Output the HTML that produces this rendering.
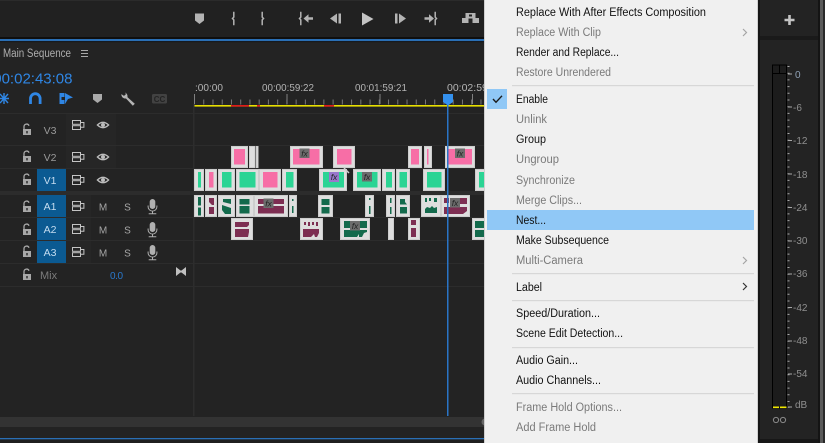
<!DOCTYPE html>
<html><head><meta charset="utf-8">
<style>
html,body{margin:0;padding:0;background:#232323;width:825px;height:443px;overflow:hidden}
svg{display:block}
text{font-family:"Liberation Sans",sans-serif}
.m{font-size:11.5px;fill:#111}
.d{font-size:11.5px;fill:#7a7a7a}
.l{font-size:10.5px;fill:#9a9a9a}
.r{font-size:10.5px;fill:#b4b4b4}
.a{fill:#c4dcf0;font-size:10.5px}
.s{font-size:10px;fill:#8f8f8f}
.t{font-size:10px;fill:#a6a6a6}
</style></head><body>
<svg width="825" height="443" viewBox="0 0 825 443" xmlns="http://www.w3.org/2000/svg">
<defs>
<g id="lock"><path d="M-4 -1h8v6h-8z" fill="#a8a8a8"/><path d="M-3 -1v-2.500a2.600 2.600 0 0 1 5-.8" fill="none" stroke="#a8a8a8" stroke-width="1.300"/><rect x="-.7" y="1" width="1.400" height="2.400" fill="#232323"/></g>
<g id="tout" fill="none" stroke="#c4c4c4" stroke-width="1"><rect x="-5.500" y="-4.500" width="8" height="3.800"/><rect x="-5.500" y=".7" width="8" height="3.800"/><path d="M2.500 -2.500h3.400v4.800h-3.400"/></g>
<g id="eye"><path d="M-5.600 0q5.600 -5.400 11.200 0q-5.600 5.400 -11.200 0z" fill="#2a2a2a" stroke="#bdbdbd" stroke-width="1.300"/><circle r="2" fill="#bdbdbd"/></g>
<g id="mic"><rect x="-2.800" y="-7" width="5.600" height="10" rx="2.800" fill="#b0b0b0"/><path d="M-4.400 -.5v1.200a4.400 4.400 0 0 0 8.800 0v-1.200M0 5.200v2.400M-3.800 7.800h7.600" fill="none" stroke="#b0b0b0" stroke-width="1"/></g>
<g id="fx"><rect x="-5" y="-5" width="10" height="9.500" fill="#6c6c6c"/><text x="0" y="3" text-anchor="middle" font-size="8.500" font-style="italic" font-family="Liberation Serif,serif" fill="#222">fx</text></g>
</defs>

<!-- base -->
<rect width="825" height="443" fill="#232323"/>
<rect width="485" height="37" fill="#212121"/>
<rect y="0" width="485" height="1" fill="#2b2b2b"/>
<rect y="37" width="485" height="2" fill="#0f0f0f"/>
<rect y="39" width="485" height="2.200" fill="#2a6fb5"/>
<rect y="41.200" width="485" height="1" fill="#121212"/>

<!-- transport -->
<g fill="#b3b3b3">
<path d="M195 13.500h9v7l-4.500 3.500-4.500-3.500z"/>
<path d="M362 12.500l11.500 6.500-11.500 6.500z" fill="#c4c4c4"/>
<path d="M330 18.500l7-5v10zM338.500 13.500h2.500v10h-2.500z"/>
<path d="M395 13.500h2.500v10h-2.500zM399 13.500l7 5-7 5z"/>
<path d="M303.500 18.500l5-4.200v2.900h4.500v2.600h-4.500v2.900z"/>
<path d="M424.500 17.200h4.500v-2.900l5 4.200-5 4.200v-2.900h-4.500z"/>
<path d="M462 18h6.500v5h-6.500zM472.500 18h6.500v5h-6.500zM465.500 13h10v5.500h-10z"/><rect x="469" y="14.500" width="3" height="2" fill="#212121"/>
</g>
<g fill="none" stroke="#b3b3b3" stroke-width="1.500">
<path d="M234.500 12.500h-.7v4.600l-1.300 1.400 1.300 1.400v4.600h.7"/>
<path d="M261.500 12.500h.7v4.600l1.300 1.400-1.300 1.400v4.600h-.7"/>
<path d="M301.500 12.500h-.7v4.600l-1.300 1.400 1.300 1.400v4.600h.7"/>
<path d="M434.500 12.500h.7v4.600l1.300 1.400-1.300 1.400v4.600h-.7"/>
</g>

<!-- sequence header -->
<text x="3" y="57" font-size="11.500px" fill="#aeaeae" textLength="68" lengthAdjust="spacingAndGlyphs">Main Sequence</text>
<path d="M81 50.500h7M81 53.500h7M81 56.500h7" stroke="#a8a8a8" stroke-width="1"/>
<text x="72.500" y="83.500" text-anchor="end" font-size="15px" fill="#2f86e4">00:02:43:08</text>

<!-- toolbar -->
<g stroke="#2f86e4" fill="none" stroke-width="1.400">
<path d="M0 94l8 9M8 94l-8 9M-1 98.500h10M4 93v11"/>
</g>
<path d="M30.500 104v-5.500a4.800 4.800 0 0 1 9.600 0v5.500" fill="none" stroke="#2f86e4" stroke-width="2.800"/>
<path d="M59.500 93h5v4h-3v3h3v4h-5z" fill="#2f86e4"/><path d="M65 93l8 4.500-5 1.500-3 5z" fill="#2f86e4"/>
<path d="M93 94h9v5.500l-4.500 3.500-4.500-3.500z" fill="#aaa"/>
<path d="M125 92.500a4 4 0 0 1 2.400 4.600l7.400 6.600-2 2-6.800-7.200a4 4 0 0 1-4.600-4.400l2.600 1.800 2-1.800z" fill="#b4b4b4"/>
<rect x="152" y="94" width="15" height="9.500" rx="1.500" fill="#424242"/>
<text x="159.500" y="102" text-anchor="middle" font-size="8px" font-weight="bold" fill="#242424">CC</text>

<!-- timeline ruler -->
<text x="195" y="91" class="r" textLength="28" lengthAdjust="spacingAndGlyphs">:00:00</text>
<text x="262" y="91" class="r" textLength="52" lengthAdjust="spacingAndGlyphs">00:00:59:22</text>
<text x="355" y="91" class="r" textLength="52" lengthAdjust="spacingAndGlyphs">00:01:59:21</text>
<text x="447" y="91" class="r">00:02:59</text>
<line x1="194" y1="102" x2="485" y2="102" stroke="#777" stroke-width="5" stroke-dasharray="1 8.240"/>
<path d="M194.500 94v10M287 94v10M380 94v10M472.500 94v10" stroke="#808080" stroke-width="1"/>
<rect x="194" y="105" width="291" height="1.600" fill="#e8e000"/>
<rect x="231" y="105" width="18" height="1.600" fill="#e01a1a"/>
<rect x="257" y="105" width="3" height="1.600" fill="#e01a1a"/>
<rect x="324" y="105" width="10" height="1.600" fill="#e01a1a"/>

<!-- track lines -->
<text x="50" y="120" text-anchor="middle" class="l" opacity=".8">V4</text>
<rect x="0" y="113" width="194" height="10" fill="#232323"/>
<rect x="66" y="113" width="50" height="55" fill="#262626"/>
<rect x="66" y="195" width="25" height="68" fill="#262626"/>
<g fill="#2c2c2c">
<rect y="113" width="485" height="1"/>
<rect y="145" width="485" height="1"/>
<rect y="168" width="485" height="1"/>
<rect y="191" width="485" height="4"/>
<rect y="217" width="485" height="1"/>
<rect y="240" width="485" height="1"/>
<rect y="263" width="485" height="1"/>
<rect y="286" width="485" height="1"/>
</g>
<rect x="193" y="104" width="1.500" height="312" fill="#2d2d2d"/>

<!-- track heads -->
<rect x="37" y="169" width="29" height="22" fill="#0b5a92"/>
<rect x="37" y="195" width="29" height="22" fill="#0b5a92"/>
<rect x="37" y="218" width="29" height="22" fill="#0b5a92"/>
<rect x="37" y="241" width="29" height="22" fill="#0b5a92"/>
<text x="50" y="134" text-anchor="middle" class="l">V3</text>
<text x="50" y="161" text-anchor="middle" class="l">V2</text>
<text x="50" y="184" text-anchor="middle" class="a">V1</text>
<text x="50" y="210" text-anchor="middle" class="a">A1</text>
<text x="50" y="233" text-anchor="middle" class="a">A2</text>
<text x="50" y="256" text-anchor="middle" class="a">A3</text>
<use href="#lock" x="27" y="130"/><use href="#lock" x="27" y="157"/><use href="#lock" x="27" y="180"/>
<use href="#lock" x="27" y="207"/><use href="#lock" x="27" y="230"/><use href="#lock" x="27" y="252"/><use href="#lock" x="27" y="275"/>
<use href="#tout" x="78" y="125"/><use href="#tout" x="78" y="157"/><use href="#tout" x="78" y="180"/>
<use href="#tout" x="78" y="206"/><use href="#tout" x="78" y="229"/><use href="#tout" x="78" y="252"/>
<use href="#eye" x="103" y="125"/><use href="#eye" x="103" y="157"/><use href="#eye" x="103" y="180"/>
<g text-anchor="middle">
<text x="103" y="210.500" class="t">M</text><text x="127.500" y="210.500" class="t">S</text>
<text x="103" y="233.500" class="t">M</text><text x="127.500" y="233.500" class="t">S</text>
<text x="103" y="256.500" class="t">M</text><text x="127.500" y="256.500" class="t">S</text>
</g>
<use href="#mic" x="152.500" y="206"/><use href="#mic" x="152.500" y="229"/><use href="#mic" x="152.500" y="252"/>
<text x="40" y="279" font-size="11px" fill="#7c7c7c">Mix</text>
<text x="110" y="279" font-size="10px" fill="#2a78cc" textLength="13">0.0</text>
<path d="M176 267l4.500 3.500h1l4.500-3.500v9l-4.500-3.500h-1l-4.500 3.500z" fill="#c0c0c0"/>

<!-- clips -->
<g fill="#dedede" stroke="#cdcdcd" stroke-width="1">
<rect x="231.500" y="146.500" width="16" height="21"/><rect x="249.500" y="146.500" width="5.500" height="21"/><rect x="256.500" y="146.500" width="1.500" height="21"/>
<rect x="290.500" y="146.500" width="32" height="21"/><rect x="333.500" y="146.500" width="21" height="21"/>
<rect x="408.500" y="146.500" width="13" height="21"/><rect x="424.500" y="146.500" width="7" height="21"/><rect x="445.500" y="146.500" width="29" height="21"/>
<rect x="194.500" y="169.500" width="9" height="21"/><rect x="205.500" y="169.500" width="11" height="21"/><rect x="218.500" y="169.500" width="16" height="21"/>
<rect x="236.500" y="169.500" width="22" height="21"/><rect x="259.500" y="169.500" width="21" height="21"/><rect x="282.500" y="169.500" width="14" height="21"/>
<rect x="319.500" y="169.500" width="27" height="21"/><rect x="353.500" y="169.500" width="27" height="21"/><rect x="382.500" y="169.500" width="12" height="21"/>
<rect x="396.500" y="169.500" width="13" height="21"/><rect x="423.500" y="169.500" width="21" height="21"/><rect x="475.500" y="169.500" width="10" height="21"/>
<rect x="194.500" y="195.500" width="9" height="21"/><rect x="205.500" y="195.500" width="11" height="21"/><rect x="218.500" y="195.500" width="16" height="21"/>
<rect x="236.500" y="195.500" width="17" height="21"/><rect x="254.500" y="195.500" width="33" height="21"/><rect x="289.500" y="195.500" width="7" height="21"/>
<rect x="318.500" y="195.500" width="14" height="21"/><rect x="365.500" y="195.500" width="8" height="21"/><rect x="386.500" y="195.500" width="8" height="21"/>
<rect x="396.500" y="195.500" width="13" height="21"/><rect x="421.500" y="195.500" width="19" height="21"/><rect x="441.500" y="195.500" width="28" height="21"/>
<rect x="231.500" y="218.500" width="21" height="21"/><rect x="300.500" y="218.500" width="22" height="21"/><rect x="340.500" y="218.500" width="29" height="21"/>
<rect x="388.500" y="218.500" width="5" height="21"/><rect x="408.500" y="218.500" width="11" height="21"/><rect x="472.500" y="218.500" width="13" height="21"/>
</g>
<!-- pink -->
<g fill="#f76ea6">
<rect x="234" y="149" width="11" height="15.500"/><rect x="293" y="149" width="26.500" height="15.500"/><rect x="337" y="149" width="14.500" height="15.500"/>
<rect x="411" y="149" width="8" height="15.500"/><rect x="427" y="149" width="1.500" height="15.500"/><rect x="448" y="149" width="24" height="15.500"/>
<rect x="209" y="172" width="4.500" height="15.500"/><rect x="263" y="172" width="14.500" height="15.500"/>
</g>
<!-- green -->
<g fill="#2bd494">
<rect x="198" y="172" width="3" height="15.500"/><rect x="222" y="172" width="9.500" height="15.500"/><rect x="239.500" y="172" width="16" height="15.500"/>
<rect x="286" y="172" width="7.500" height="15.500"/><rect x="323" y="172" width="21" height="15.500"/><rect x="357" y="172" width="20.500" height="15.500"/>
<rect x="386" y="172" width="6" height="15.500"/><rect x="399.500" y="172" width="7.500" height="15.500"/><rect x="427" y="172" width="14.500" height="15.500"/><rect x="479" y="172" width="6" height="15.500"/>
</g>
<!-- audio teal -->
<g fill="#136a4c">
<rect x="198" y="197" width="3" height="8.500"/><rect x="198" y="207.500" width="3" height="8"/>
<path d="M223 199h8v5l-8-2zM222 205l9 3v6h-6l-3-4z"/>
<rect x="239.500" y="199" width="10" height="5.500"/><rect x="239.500" y="206" width="10" height="7.500"/>
<rect x="292" y="199" width="1.500" height="2"/><rect x="292" y="206" width="1.500" height="7"/>
<rect x="321.500" y="199" width="8" height="6"/><rect x="321.500" y="207" width="8" height="6.500"/>
<rect x="369" y="198" width="1.500" height="2"/><rect x="369" y="206" width="1.500" height="8"/>
<rect x="390" y="198" width="1.500" height="5"/><rect x="390" y="207" width="1.500" height="7"/>
<path d="M400 199h5v3l2 2.500h-7zM400 207h7v6.500h-7z"/>
<path d="M425 198h2v4h-2zM429 198h2v3h-2zM434 198h3v4h-3zM425 209l2-2 3 1 2-2 2 2 3-1v6h-12z"/>
<path d="M344 221h6v7h-6zM359 221h8v7h-8zM344 230h23v2l-3 1-2 4h-3v-3l-2 3h-13z"/>
<rect x="475" y="221" width="10" height="7"/><rect x="475" y="230" width="10" height="7"/>
</g>
<!-- audio maroon -->
<g fill="#7d2e52">
<path d="M209 198h5v7h-2l-3-3zM209 207h5v7h-5z"/>
<rect x="258" y="199" width="26" height="5"/><rect x="258" y="206" width="26" height="7.500"/>
<path d="M444 198h5v5h-5zM459 198h8v6h-8zM444 207h23v4l-4 3h-19z"/>
<path d="M235 222h14v3l-2 2h-12zM235 229h14v3l-1 5h-13z"/>
<path d="M304 222h2v3h-2zM308 222h2v4h-2zM312 222h2v3h-2zM316 222h2v4h-2zM303 229h16v4l-2 4h-2l-1-3-3 3h-8z"/>
<path d="M411 220h5v5h-5zM411 228h5v9h-5z"/>
</g>
<use href="#fx" x="304.500" y="153.500"/><use href="#fx" x="367" y="177"/><use href="#fx" x="268.500" y="203.500"/>
<use href="#fx" x="455" y="203"/><use href="#fx" x="355" y="226"/>
<use href="#fx" x="460" y="153.500"/>
<rect x="329" y="172" width="10" height="10" fill="#9977cc"/>
<text x="334" y="180" text-anchor="middle" font-size="8.500px" font-style="italic" font-family="Liberation Serif,serif" fill="#222">fx</text>
<path d="M344 168l5 5" stroke="#cfcfcf" stroke-width="1.500"/>

<!-- playhead -->
<rect x="447" y="100" width="1.500" height="316" fill="#2a74c6"/>
<path d="M443 94h10v8l-5 3.500-5-3.500z" fill="#3491ee"/>

<!-- scrollbar bottom -->
<rect y="417" width="485" height="10" fill="#333"/>
<circle cx="485" cy="422" r="3.500" fill="#666"/>
<rect y="427" width="485" height="11" fill="#232323"/>
<rect y="438" width="485" height="1.400" fill="#2a6fb5"/>
<rect y="439.400" width="485" height="4" fill="#1f1f1f"/>

<!-- right panel -->
<rect x="757" width="68" height="443" fill="#232323"/>
<rect x="757" width="3" height="443" fill="#151515"/>
<rect x="818" width="2" height="443" fill="#141414"/>
<rect x="820" width="3" height="443" fill="#5a5a5a"/>
<rect x="823" width="2" height="443" fill="#2a2a2a"/>
<rect x="760" y="36" width="58" height="4" fill="#1a1a1a"/>
<rect x="760" y="439" width="58" height="4" fill="#171717"/>
<path d="M784.500 20h10M789.500 15v10" stroke="#c4c4c4" stroke-width="2.600"/>
<rect x="772.500" y="65" width="14" height="343" fill="#1c1c1c" stroke="#000" stroke-width="1"/>
<path d="M772 73.500h15M779.500 65v8" stroke="#000" stroke-width="1" fill="none"/>
<rect x="773" y="406.500" width="6" height="1.600" fill="#f0e800"/><rect x="780" y="406.500" width="6.500" height="1.600" fill="#f0e800"/>
<line x1="788.500" y1="66" x2="788.500" y2="408" stroke="#a8a8a8" stroke-width="2" stroke-dasharray="1 5.700"/>
<path d="M788 74h4M788 107h4M788 140.500h4M788 174h4M788 207.500h4M788 241h4M788 274h4M788 307.500h4M788 341h4M788 374h4M788 407h4" stroke="#a8a8a8" stroke-width="1"/>
<text x="795" y="78" class="s" style="fill:#8fa0b4">0</text>
<text x="793" y="111" class="s">-6</text>
<text x="793" y="144" class="s">-12</text>
<text x="793" y="178" class="s">-18</text>
<text x="793" y="211" class="s">-24</text>
<text x="793" y="244" class="s">-30</text>
<text x="793" y="277" class="s">-36</text>
<text x="793" y="311" class="s">-42</text>
<text x="793" y="344" class="s">-48</text>
<text x="793" y="377" class="s">-54</text>
<text x="795" y="408" class="s">dB</text>
<circle cx="776" cy="420" r="2.600" fill="none" stroke="#8a8a8a"/><circle cx="783" cy="420" r="2.600" fill="none" stroke="#8a8a8a"/>

<!-- context menu -->
<rect x="484.500" y="-1" width="273" height="445" fill="#f0f0f0" stroke="#cfcfcf"/>
<rect x="487" y="89" width="20" height="20" fill="#90c8f6"/>
<path d="M493 99l3 3.200 6-6.400" fill="none" stroke="#1a1a1a" stroke-width="1.400"/>
<rect x="487" y="210" width="267" height="20" fill="#90c8f6"/>
<g fill="#d7d7d7">
<rect x="512" y="85" width="242" height="1.200"/>
<rect x="512" y="273" width="242" height="1.200"/>
<rect x="512" y="300" width="242" height="1.200"/>
<rect x="512" y="347" width="242" height="1.200"/>
<rect x="512" y="393" width="242" height="1.200"/>
</g>
<g lengthAdjust="spacingAndGlyphs">
<text x="516" y="16" class="m" textLength="190" lengthAdjust="spacingAndGlyphs">Replace With After Effects Composition</text>
<text x="516" y="36" class="d" textLength="85" lengthAdjust="spacingAndGlyphs">Replace With Clip</text>
<text x="516" y="56" class="m" textLength="103" lengthAdjust="spacingAndGlyphs">Render and Replace...</text>
<text x="516" y="76" class="d" textLength="95" lengthAdjust="spacingAndGlyphs">Restore Unrendered</text>
<text x="516" y="103" class="m" textLength="32" lengthAdjust="spacingAndGlyphs">Enable</text>
<text x="516" y="123" class="d" textLength="31" lengthAdjust="spacingAndGlyphs">Unlink</text>
<text x="516" y="143" class="m" textLength="30" lengthAdjust="spacingAndGlyphs">Group</text>
<text x="516" y="163" class="d" textLength="43" lengthAdjust="spacingAndGlyphs">Ungroup</text>
<text x="516" y="184" class="d" textLength="59" lengthAdjust="spacingAndGlyphs">Synchronize</text>
<text x="516" y="204" class="d" textLength="66" lengthAdjust="spacingAndGlyphs">Merge Clips...</text>
<text x="516" y="224" class="m" textLength="30" lengthAdjust="spacingAndGlyphs">Nest...</text>
<text x="516" y="244" class="m" textLength="93" lengthAdjust="spacingAndGlyphs">Make Subsequence</text>
<text x="516" y="264" class="d" textLength="67" lengthAdjust="spacingAndGlyphs">Multi-Camera</text>
<text x="516" y="291" class="m" textLength="26" lengthAdjust="spacingAndGlyphs">Label</text>
<text x="516" y="317" class="m" textLength="84" lengthAdjust="spacingAndGlyphs">Speed/Duration...</text>
<text x="516" y="337" class="m" textLength="107" lengthAdjust="spacingAndGlyphs">Scene Edit Detection...</text>
<text x="516" y="364" class="m" textLength="62" lengthAdjust="spacingAndGlyphs">Audio Gain...</text>
<text x="516" y="384" class="m" textLength="85" lengthAdjust="spacingAndGlyphs">Audio Channels...</text>
<text x="516" y="411" class="d" textLength="106" lengthAdjust="spacingAndGlyphs">Frame Hold Options...</text>
<text x="516" y="431" class="d" textLength="80" lengthAdjust="spacingAndGlyphs">Add Frame Hold</text>
</g>
<path d="M743 29l3.500 3.500-3.500 3.500M743 257l3.500 3.500-3.500 3.500" fill="none" stroke="#a5a5a5" stroke-width="1.200"/>
<path d="M743 283l3.500 3.500-3.500 3.500" fill="none" stroke="#333" stroke-width="1.200"/>
</svg>
</body></html>
